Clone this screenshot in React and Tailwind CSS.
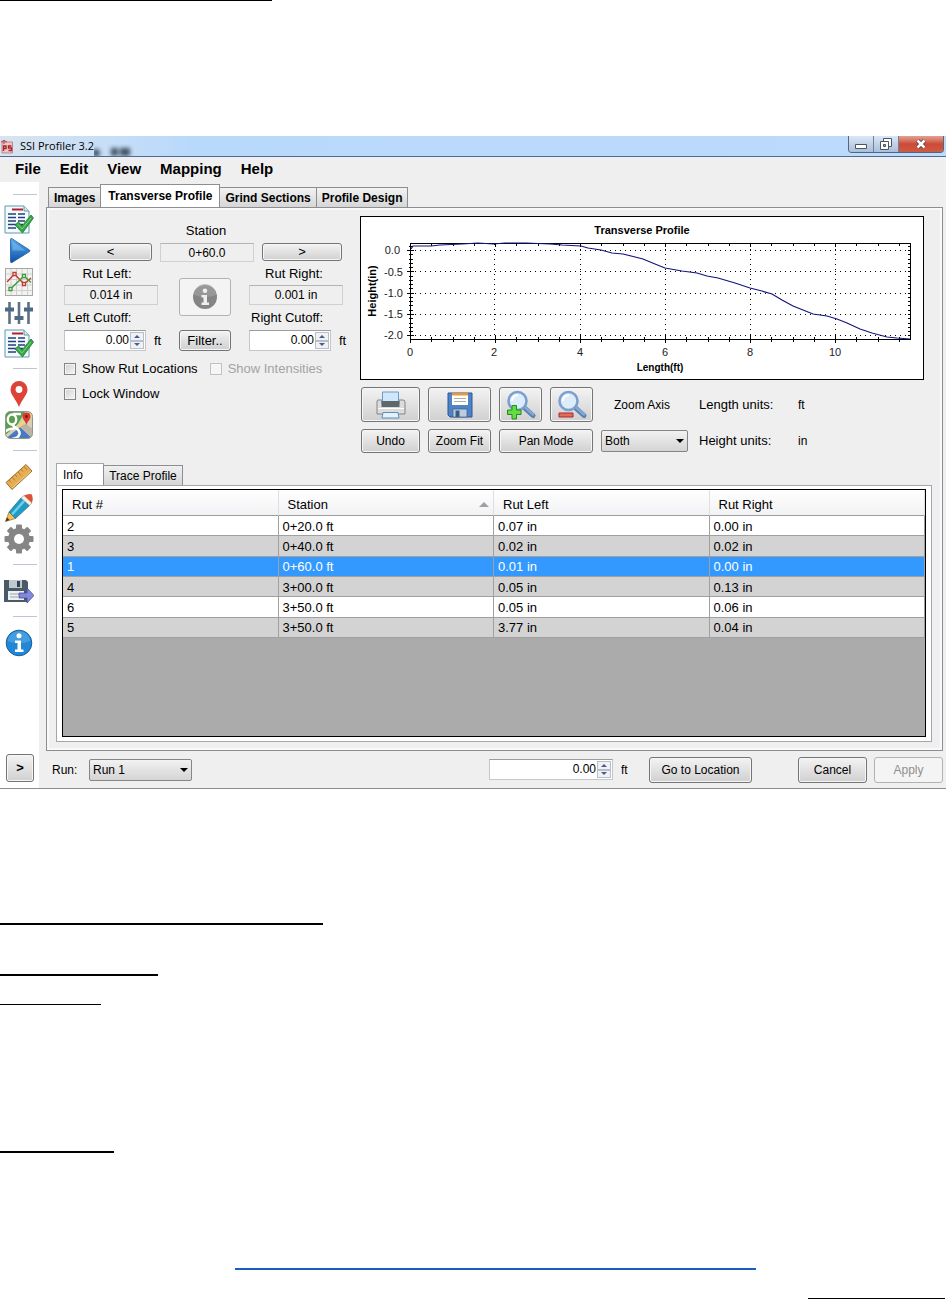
import { useState } from 'react'
import clsx from 'clsx'

const MENUS = ['File', 'Edit', 'View', 'Mapping', 'Help']
const TABS = ['Images', 'Transverse Profile', 'Grind Sections', 'Profile Design']

const RUTS = [
  { id: 2, station: '0+20.0 ft', left: '0.07 in', right: '0.00 in' },
  { id: 3, station: '0+40.0 ft', left: '0.02 in', right: '0.02 in' },
  { id: 1, station: '0+60.0 ft', left: '0.01 in', right: '0.00 in' },
  { id: 4, station: '3+00.0 ft', left: '0.05 in', right: '0.13 in' },
  { id: 6, station: '3+50.0 ft', left: '0.05 in', right: '0.06 in' },
  { id: 5, station: '3+50.0 ft', left: '3.77 in', right: '0.04 in' },
]

const PROFILE =
  '51,33 53,30 71,30 80,29 102,28 118,27 133,28 145,27 166,27 190,28 202,29 221,30 228,32 241,34 252,37 263,38 283,43 295,48 305,52 322,55 337,57 347,60 358,62 375,67 390,72 402,75 412,78 422,84 433,90 443,94 453,98 467,100 477,103 487,107 500,113 512,117 527,121 537,122 550,123'

/* ---------- icons ---------- */

function ReportIcon() {
  return (
    <svg viewBox="0 0 30 30" className="size-[30px]" aria-hidden="true">
      <path d="M1 1h19l5 5v22H1z" fill="#f4f9fc" stroke="#5f9aae" />
      <path d="M20 1v5h5" fill="#d4e6ee" stroke="#5f9aae" />
      <path d="M8 4.500h11" stroke="#b3212f" strokeWidth="2" />
      <path d="M4 9h8M4 12.500h8M4 16h8M4 19.500h8M4 23h8M14 9h7M14 12.500h7M14 16h7M14 19.500h5M14 23h5" stroke="#22407e" strokeWidth="1.500" />
      <path d="M11 20l3.500-3 3.500 4L27 10l2.500 3L18.500 28z" fill="#35a845" stroke="#1f7a31" strokeWidth=".8" />
      <path d="M14 19.500l4 4.500L27 13" fill="none" stroke="#86d890" strokeWidth=".9" />
    </svg>
  )
}

function PlayIcon() {
  return (
    <svg viewBox="0 0 30 30" className="size-[30px]" aria-hidden="true">
      <defs>
        <linearGradient id="play" x1="0" y1="0" x2="0" y2="1">
          <stop offset="0" stopColor="#5aaeee" />
          <stop offset="1" stopColor="#0e4fa8" />
        </linearGradient>
      </defs>
      <path d="M6.500 3.500Q6.500 2 8 2.700L25.500 14q1 .8 0 1.600L8 26.500q-1.500.7-1.500-1z" fill="url(#play)" stroke="#1d5c9e" strokeWidth=".8" />
      <path d="M8.500 5.500l13 9h-13z" fill="#8fcbf5" opacity=".45" />
    </svg>
  )
}

function TrendIcon() {
  return (
    <svg viewBox="0 0 30 30" className="size-[30px]" aria-hidden="true">
      <rect x="1.500" y="1.500" width="27" height="27" fill="#f2f2f0" stroke="#a8a8a8" />
      <path d="M7 2v26M12.500 2v26M18 2v26M23.500 2v26M2 7h26M2 12.500h26M2 18h26M2 23.500h26" stroke="#d0d0ce" />
      <path d="M3 15l7.500-8L20 17l7-6" fill="none" stroke="#c23b30" strokeWidth="1.400" />
      <path d="M6.500 22L20 9l7 6.500" fill="none" stroke="#3f9a3c" strokeWidth="1.400" />
      <g fill="#fff" strokeWidth="1.300">
        <path d="M9 5.500h3v3H9zM18.500 15.500h3v3h-3z" stroke="#c23b30" />
        <path d="M5 20.500h3v3H5zM18.500 7.500h3v3h-3z" stroke="#3f9a3c" />
      </g>
    </svg>
  )
}

function SlidersIcon() {
  return (
    <svg viewBox="0 0 30 30" className="size-[30px]" aria-hidden="true">
      <path d="M5.500 4v22M15 4v22M24.500 4v22" stroke="#5d7183" strokeWidth="2.600" />
      <path d="M1 9.500h9v4H1zM10.500 18h9v4h-9zM20 9.500h9v4h-9z" fill="#4c6a85" />
    </svg>
  )
}

function PinIcon() {
  return (
    <svg viewBox="0 0 30 30" className="size-[30px]" aria-hidden="true">
      <path d="M15 28C12 20 6.500 16 6.500 10.500a8.500 8.500 0 0 1 17 0C23.500 16 18 20 15 28z" fill="#dc4438" />
      <circle cx="15" cy="10.500" r="3.400" fill="#fff" />
    </svg>
  )
}

function MapsIcon() {
  return (
    <svg viewBox="0 0 30 30" className="size-[30px]" aria-hidden="true">
      <defs>
        <clipPath id="maps"><rect x="1.500" y="1.500" width="27" height="27" rx="5" /></clipPath>
      </defs>
      <g clipPath="url(#maps)">
        <path d="M0 0h30v30H0z" fill="#d9cfb4" />
        <path d="M0 0h22L14 14 0 26z" fill="#5a9e50" />
        <path d="M0 30l16-13 14 13z" fill="#4779c4" />
        <path d="M16 16l14 14V20l-8-6z" fill="#b9b4a3" />
        <path d="M14 17L30 3" stroke="#efd877" strokeWidth="2.500" />
        <ellipse cx="8" cy="9.500" rx="4.200" ry="5" fill="none" stroke="#fff" strokeWidth="2.400" />
        <path d="M9 4h8M9 14.500q0 2 3 3.500 4 2.500 3.500 6-1 4.500-7.500 5M11 18.500q-6-.5-10 3" fill="none" stroke="#fff" strokeWidth="2.600" />
      </g>
      <path d="M22.500 15c-1-4-4-5.500-4-8.500a4 4 0 0 1 8 0c0 3-3 4.500-4 8.500z" fill="#d83a30" />
      <circle cx="22.500" cy="6.500" r="1.400" fill="#7d1712" />
      <rect x="1.500" y="1.500" width="27" height="27" rx="5" fill="none" stroke="#8c9a84" />
    </svg>
  )
}

function RulerIcon() {
  return (
    <svg viewBox="0 0 30 30" className="size-[30px]" aria-hidden="true">
      <path d="M2 20.500L22 2.500l6 6.500L8 27.500z" fill="#e6ae53" stroke="#9a6c2d" />
      <path d="M5 18l2 2.500M8 15l3 3.500M11 12.500l2 2.500M14 10l3 3.500M17 7l2 2.500M20 4.500l3 3.500" stroke="#b07c34" />
      <path d="M8 26L27 9" stroke="#f5d08c" />
    </svg>
  )
}

function PencilIcon() {
  return (
    <svg viewBox="0 0 30 30" className="size-[30px]" aria-hidden="true">
      <path d="M1.500 28.500L5 19l6.500 6.500z" fill="#f3bd55" stroke="#9c6b24" strokeWidth=".7" />
      <path d="M1.500 28.500l1.500-4 2.500 2.500z" fill="#3c332c" />
      <path d="M5 19L17 5l8.500 7.500-14 13z" fill="#219bc4" stroke="#176d8c" strokeWidth=".7" />
      <path d="M8 21.500L20.500 7.500" stroke="#6bd0ea" strokeWidth="2.500" />
      <path d="M17 5l3-2.500 8 7.500-2.500 2.500z" fill="#f3efe9" stroke="#998f87" strokeWidth=".6" />
      <path d="M20 2.500q5-2.500 8-1 1.500 4 0 8.500z" fill="#dc5237" />
    </svg>
  )
}

function GearIcon() {
  return (
    <svg viewBox="0 0 30 30" className="size-[30px]" aria-hidden="true">
      <g fill="#858585">
        <rect x="12" y=".5" width="6" height="29" rx="1" />
        <rect x="12" y=".5" width="6" height="29" rx="1" transform="rotate(45 15 15)" />
        <rect x="12" y=".5" width="6" height="29" rx="1" transform="rotate(90 15 15)" />
        <rect x="12" y=".5" width="6" height="29" rx="1" transform="rotate(135 15 15)" />
        <circle cx="15" cy="15" r="11" />
      </g>
      <circle cx="15" cy="15" r="5" fill="#fff" />
    </svg>
  )
}

function ExportIcon() {
  return (
    <svg viewBox="0 0 30 30" className="size-[30px]" aria-hidden="true">
      <path d="M0 4h22l2 2v20H0z" fill="#4a5a67" />
      <path d="M5 4h13v8H5z" fill="#bfc9ce" />
      <path d="M13 5h3v6h-3z" fill="#33424e" />
      <path d="M4 15h16v9H4z" fill="#eef1f2" />
      <path d="M6 18h10M6 21h8" stroke="#9aa5ab" />
      <path d="M15 17h8v-5l7 7.500-7 7.500v-5h-8z" fill="#8288dd" stroke="#464b9c" strokeWidth=".8" />
    </svg>
  )
}

function InfoIcon() {
  return (
    <svg viewBox="0 0 30 30" className="size-[30px]" aria-hidden="true">
      <circle cx="15" cy="15" r="12.800" fill="#2287d4" stroke="#1560a5" />
      <path d="M3.500 13a11.600 11.600 0 0 1 23 0q-11 4.500-23 0z" fill="#63b4ec" opacity=".5" />
      <circle cx="15" cy="7.800" r="2.500" fill="#fff" />
      <path d="M11 12.500h6v9h2.500v2.500h-8.500v-2.500h2.500v-6.500H11z" fill="#fff" />
    </svg>
  )
}

function InfoGrayIcon() {
  return (
    <svg viewBox="0 0 26 26" className="size-[26px]" aria-hidden="true">
      <circle cx="13" cy="13" r="12" fill="#858585" />
      <path d="M2 11a11 11 0 0 1 22 0q-11 4-22 0z" fill="#a5a5a5" opacity=".6" />
      <circle cx="13" cy="6.800" r="2.300" fill="#efefef" />
      <path d="M9.500 11h5.500v7.500h2V21H9.500v-2.500h2v-5h-2z" fill="#efefef" />
    </svg>
  )
}

function PrinterIcon() {
  return (
    <svg viewBox="0 0 30 28" className="h-7 w-[30px]" aria-hidden="true">
      <path d="M2 9h4v4h17V9h4q2 0 2 2v12H1V11q0-2 1-2z" fill="#dcdcdc" stroke="#858585" />
      <path d="M6.500 1h16v11h-16z" fill="#cfe6fb" stroke="#6d9cc7" />
      <path d="M5.500 10h18v6h-18z" fill="#5d686c" />
      <path d="M2 17.500h26" stroke="#fff" />
      <path d="M7 21.500h15l1 5.500H6z" fill="#e4f2fd" stroke="#5f8fb8" />
    </svg>
  )
}

function FloppyIcon() {
  return (
    <svg viewBox="0 0 26 26" className="size-[26px]" aria-hidden="true">
      <path d="M1 1h24v24H3l-2-2z" fill="#4f83c7" stroke="#2c5791" />
      <path d="M5 1h16v12H5z" fill="#fffdf6" />
      <path d="M5 1h16v2.500H5z" fill="#e99736" />
      <path d="M7 6.500h12M7 9.500h12" stroke="#a2adb8" />
      <path d="M6 17h14v8H6z" fill="#bdcddd" stroke="#365d8c" strokeWidth=".7" />
      <path d="M8.500 18.500h4V25h-4z" fill="#365f86" />
    </svg>
  )
}

function MagnifierIcon({ minus }) {
  return (
    <svg viewBox="0 0 32 30" className="h-[30px] w-8" aria-hidden="true">
      <path d="M18 16.500L28 25.500" stroke="#5b7fb0" strokeWidth="5" strokeLinecap="round" />
      <path d="M18 15.500L28 24.500" stroke="#86a9d3" strokeWidth="2.500" strokeLinecap="round" />
      <circle cx="12.500" cy="11" r="9" fill="#dcecfa" stroke="#7b9fce" strokeWidth="2.600" />
      <path d="M7 11q0-5.500 6-6" fill="none" stroke="#fff" strokeWidth="2" />
      {minus ? (
        <path d="M3 23h14v4H3z" fill="#e56a5e" stroke="#a92b25" />
      ) : (
        <path d="M7 15.500h4.500V20H16v4.500h-4.500V29H7v-4.500H2.500V20H7z" fill="#63dc45" stroke="#258a1e" />
      )}
    </svg>
  )
}

function AppIcon() {
  return (
    <svg viewBox="0 0 13 15" className="h-[15px] w-[13px]" aria-hidden="true">
      <path d="M2 3h10.500v11H2z" fill="#e8c9c8" stroke="#b0696a" strokeWidth=".7" />
      <path d="M1 3q3-3 6 0M4 1v4" fill="none" stroke="#b83a3d" />
      <path d="M3.500 12V7h2.500v2.500H3.500M11.500 7H8.500v2h3v2.500h-3" fill="none" stroke="#b31f25" strokeWidth="1.400" />
    </svg>
  )
}

/* ---------- controls ---------- */

const BUTTON = 'flex items-center justify-center rounded-[3px] border'
const BUTTON_ON = 'border-[#747474] bg-linear-to-b from-[#f3f3f3] to-[#d0d0d0] text-black shadow-[inset_0_0_0_1px_#f6f6f6]'
const BUTTON_OFF = 'border-[#b2b2b2] bg-[#f4f4f4] text-[#8f8f8f]'

function Button({ className, disabled, children, ...rest }) {
  return (
    <button type="button" disabled={disabled} className={clsx(BUTTON, disabled ? BUTTON_OFF : BUTTON_ON, className)} {...rest}>
      {children}
    </button>
  )
}

function Spinner({ id, label, className }) {
  const [value, setValue] = useState(0)
  const step = d => setValue(v => Math.max(0, v + d))

  return (
    <div className={clsx('flex h-[21px] border border-[#c4c6cc] border-t-[#9a9ca2] bg-white p-px', className)}>
      <input
        id={id}
        aria-label={label}
        value={value.toFixed(2)}
        onChange={e => setValue(Number(e.target.value) || 0)}
        className="min-w-0 flex-1 pb-0.5 pr-px text-right text-[12px] leading-4 outline-none"
      />
      <div className="flex w-[14px] flex-col">
        <button type="button" aria-label="Increase" onClick={() => step(0.25)} className="flex flex-1 items-center justify-center border border-[#b9bfc9] bg-[#eff1f5]">
          <svg viewBox="0 0 6 3" className="h-[3px] w-1.5"><path d="M0 3l3-3 3 3z" fill="#4a5c8c" /></svg>
        </button>
        <button type="button" aria-label="Decrease" onClick={() => step(-0.25)} className="flex flex-1 items-center justify-center border border-[#b9bfc9] bg-[#eff1f5]">
          <svg viewBox="0 0 6 3" className="h-[3px] w-1.5"><path d="M0 0l3 3 3-3z" fill="#4a5c8c" /></svg>
        </button>
      </div>
    </div>
  )
}

function Select({ id, label, options, className }) {
  return (
    <div className={clsx('relative', className)}>
      <select id={id} aria-label={label} className="h-[22px] w-full appearance-none rounded-[2px] border border-[#858585] bg-linear-to-b from-[#f2f2f2] to-[#d4d4d4] pl-[3px] text-[12px] outline-none">
        {options.map(o => <option key={o}>{o}</option>)}
      </select>
      <svg viewBox="0 0 8 4" className="pointer-events-none absolute right-1 top-[9px] h-1 w-2" aria-hidden="true">
        <path d="M0 0h8L4 4z" />
      </svg>
    </div>
  )
}

function Readout({ id, label, value, className }) {
  return (
    <input id={id} aria-label={label} readOnly value={value} className={clsx('w-[94px] border border-[#d0d0d0] border-t-[#b4b4b4] bg-[#efefef] text-center text-[12px] outline-none', className)} />
  )
}

function Check({ label, disabled }) {
  return (
    <label className={clsx('flex h-4 items-center gap-1.5', disabled && 'text-[#a3a3a3]')}>
      <input
        type="checkbox"
        disabled={disabled}
        className={clsx(
          'size-3 appearance-none border checked:bg-[#3a6ea5]',
          disabled ? 'border-[#c2c2c2] bg-[#f6f6f6]' : 'border-[#858585] bg-linear-to-br from-[#cfcfcf] to-[#f8f8f8] shadow-[inset_0_0_0_1px_#f4f4f4]',
        )}
      />
      {label}
    </label>
  )
}

function Cutoff({ id, label, className }) {
  return (
    <>
      <label htmlFor={id} className={clsx('mt-[5px] block leading-4', className)}>{label}</label>
      <div className="mt-1 flex items-center">
        <Spinner id={id} className="w-[82px]" />
        <span className="ml-2">ft</span>
      </div>
    </>
  )
}

/* ---------- sections ---------- */

function TitleBar() {
  return (
    <header className="flex h-[21px] items-start border-b border-[#4f6a96] bg-linear-to-r from-[#d8e4f0] via-[#b9d9fb] via-20% to-[#bcdafb]">
      <div className="flex h-5 items-center gap-[7px] font-['Open_Sans',sans-serif] text-[11px]">
        <AppIcon />
        <h1>SSI Profiler 3.2</h1>
      </div>
      <svg viewBox="0 0 44 20" className="h-5 w-11" aria-hidden="true">
        <g fill="#1f2f3d" opacity=".8" className="blur-[2px]">
          <circle cx="2" cy="17" r="4" />
          <path d="M17 12h7v8h-7zM26 12h10v8H26z" />
        </g>
      </svg>
      <div className="ml-auto mr-0.5 flex h-[17px] overflow-hidden rounded-b-[4px] border border-t-0 border-[#55657d]">
        <button type="button" aria-label="Minimize" className="flex w-[25px] items-center justify-center border-r border-[#6f819b] bg-linear-to-b from-[#dbe7f5] to-[#a9bfd9]">
          <svg viewBox="0 0 12 5" className="mt-1 h-[5px] w-3"><path d="M.5.5h11v4H.5z" fill="#fff" stroke="#4b5466" /></svg>
        </button>
        <button type="button" aria-label="Restore" className="flex w-[25px] items-center justify-center border-r border-[#6f819b] bg-linear-to-b from-[#dbe7f5] to-[#a9bfd9]">
          <svg viewBox="0 0 12 12" className="size-3">
            <path d="M3.500.5h8v8h-8z" fill="#fff" stroke="#4b5466" />
            <path d="M.5 3.500h8v8h-8z" fill="#fff" stroke="#4b5466" />
            <path d="M3.500 6.500h2v2h-2z" fill="#8da3c0" stroke="#4b5466" />
          </svg>
        </button>
        <button type="button" aria-label="Close" className="flex w-[44px] items-center justify-center bg-linear-to-b from-[#e3a194] via-[#cc4a36] to-[#cf5a44]">
          <svg viewBox="0 0 12 10" className="h-2.5 w-3">
            <path d="M2.500 1.500l7 7M9.500 1.500l-7 7" stroke="#5c3535" strokeWidth="4.200" />
            <path d="M2.500 1.500l7 7M9.500 1.500l-7 7" stroke="#fff" strokeWidth="2.600" />
          </svg>
        </button>
      </div>
    </header>
  )
}

function Divider({ className }) {
  return <hr className={clsx('ml-[13px] w-6 border-[#bcc5d4]', className)} />
}

function Tool({ label, children }) {
  return (
    <button type="button" aria-label={label} className="flex h-[31px] w-full items-center pl-1">
      {children}
    </button>
  )
}

function Sidebar() {
  return (
    <aside className="flex w-[39px] shrink-0 flex-col bg-white pb-1.5">
      <Divider className="mb-[9px] mt-3" />
      <Tool label="Report"><ReportIcon /></Tool>
      <Tool label="Run"><PlayIcon /></Tool>
      <Tool label="Profile chart"><TrendIcon /></Tool>
      <Tool label="Settings"><SlidersIcon /></Tool>
      <Tool label="Summary report"><ReportIcon /></Tool>
      <Divider className="my-[9px]" />
      <Tool label="Markers"><PinIcon /></Tool>
      <Tool label="Maps"><MapsIcon /></Tool>
      <Divider className="my-2.5" />
      <Tool label="Measure"><RulerIcon /></Tool>
      <Tool label="Edit"><PencilIcon /></Tool>
      <Tool label="Options"><GearIcon /></Tool>
      <Divider className="my-2.5" />
      <Tool label="Export"><ExportIcon /></Tool>
      <Divider className="my-2.5" />
      <Tool label="About"><InfoIcon /></Tool>
      <Button className="ml-1.5 mt-auto h-7 w-7 text-[13px] font-bold">&gt;</Button>
    </aside>
  )
}

function ProfileChart() {
  const minorX = Array.from({ length: 24 }, (_, i) => 50.5 + i * 21.25)
  const minorY = Array.from({ length: 22 }, (_, i) => 30.2 + i * 4.27)

  return (
    <figure className="border border-black bg-white">
      <svg viewBox="1 1 562 162" className="block w-full font-['Liberation_Sans',sans-serif]" role="img" aria-label="Transverse Profile">
        <text x="282" y="18" textAnchor="middle" fontSize="11" fontWeight="bold">Transverse Profile</text>
        <g stroke="#000" shapeRendering="crispEdges">
          {[34.5, 55.5, 77.5, 98.5, 119.5].map(y => (
            <path key={y} d={`M50 ${y}H550`} strokeDasharray="1 4" />
          ))}
          {[134.5, 220.5, 305.5, 390.5, 475.5].map(x => (
            <path key={x} d={`M${x} 28V123`} strokeDasharray="1 4" />
          ))}
          <path d="M50.500 27.500H550.500V123.500H50.500z" fill="none" />
          {minorX.map((x, i) => (
            <path key={x} d={i % 4 ? `M${x} 121v5M${x} 27v3` : `M${x} 120v7M${x} 27v4`} />
          ))}
          {minorY.map(y => (
            <path key={y} d={`M49 ${y}h4M548 ${y}h3`} />
          ))}
          {[34.5, 55.5, 77.5, 98.5, 119.5].map(y => (
            <path key={y} d={`M47 ${y}h7`} />
          ))}
        </g>
        <polyline points={PROFILE} fill="none" stroke="#14147c" strokeWidth="1.200" />
        <g fontSize="11" fill="#222" textAnchor="end">
          <text x="40" y="38">0.0</text>
          <text x="43" y="60">-0.5</text>
          <text x="43" y="81">-1.0</text>
          <text x="43" y="102">-1.5</text>
          <text x="43" y="123">-2.0</text>
        </g>
        <g fontSize="11" fill="#222" textAnchor="middle">
          <text x="50" y="140">0</text>
          <text x="134" y="140">2</text>
          <text x="220" y="140">4</text>
          <text x="305" y="140">6</text>
          <text x="390" y="140">8</text>
          <text x="475" y="140">10</text>
        </g>
        <text x="300" y="155" textAnchor="middle" fontSize="10" fontWeight="bold">Length(ft)</text>
        <text transform="translate(16 75) rotate(-90)" textAnchor="middle" fontSize="11" fontWeight="bold">Height(in)</text>
      </svg>
    </figure>
  )
}

function StationControls() {
  return (
    <section className="w-[296px] shrink-0 pt-[7px] text-[13px]">
      <label htmlFor="station" className="block w-[284px] text-center leading-4">Station</label>
      <div className="mt-1 flex gap-2 pl-[5px]">
        <Button className="h-[18px] w-[83px]">&lt;</Button>
        <Readout id="station" value="0+60.0" className="h-[19px]" />
        <Button className="h-[18px] w-[80px]">&gt;</Button>
      </div>
      <div className="mt-1 flex">
        <div className="w-[115px]">
          <label htmlFor="rut-left" className="block w-[86px] text-center leading-4">Rut Left:</label>
          <Readout id="rut-left" value="0.014 in" className="mt-[3px] h-5" />
          <Cutoff id="cutoff-left" label="Left Cutoff:" className="pl-1" />
        </div>
        <div className="flex w-[52px] flex-col justify-end gap-[14px]">
          <Button disabled aria-label="Station info" className="h-[38px]"><InfoGrayIcon /></Button>
          <Button className="h-[21px]">Filter..</Button>
        </div>
        <div className="ml-[18px]">
          <label htmlFor="rut-right" className="block w-[90px] text-center leading-4">Rut Right:</label>
          <Readout id="rut-right" value="0.001 in" className="mt-[3px] h-5" />
          <Cutoff id="cutoff-right" label="Right Cutoff:" className="pl-0.5" />
        </div>
      </div>
      <div className="mt-2.5 flex gap-3">
        <Check label="Show Rut Locations" />
        <Check label="Show Intensities" disabled />
      </div>
      <div className="mt-[9px]">
        <Check label="Lock Window" />
      </div>
    </section>
  )
}

function ChartControls() {
  return (
    <div className="mt-[7px] grid grid-cols-[59px_63px_43px_43px_87px_94px_auto] items-center gap-x-2 gap-y-[7px] pl-px text-[12px]">
      <Button aria-label="Print" className="h-[35px]"><PrinterIcon /></Button>
      <Button aria-label="Save" className="h-[35px]"><FloppyIcon /></Button>
      <Button aria-label="Zoom in" className="h-[35px]"><MagnifierIcon /></Button>
      <Button aria-label="Zoom out" className="h-[35px]"><MagnifierIcon minus /></Button>
      <label htmlFor="zoom-axis" className="pl-[13px]">Zoom Axis</label>
      <span className="pl-[3px] text-[13px]">Length units:</span>
      <span>ft</span>
      <Button className="h-6">Undo</Button>
      <Button className="h-6">Zoom Fit</Button>
      <Button className="col-span-2 h-6">Pan Mode</Button>
      <Select id="zoom-axis" options={['Both', 'X', 'Y']} />
      <span className="pl-[3px] text-[13px]">Height units:</span>
      <span>in</span>
    </div>
  )
}

function RutTable() {
  const [selected, setSelected] = useState(1)
  const cell = 'border-b border-r border-[#a0a0a0] pl-1 pt-0.5'
  const head = 'border-b border-r border-b-[#9c9c9c] border-r-[#dcdfe3] pl-[9px] pr-1 pt-1 text-left font-normal'

  return (
    <div className="h-[248px] border border-black bg-[#ababab] text-[13px] leading-4">
      <table className="h-[148px] w-full table-fixed border-separate border-spacing-0">
        <thead>
          <tr className="h-[26px] bg-linear-to-b from-white to-[#f1f2f4]">
            <th className={head}>Rut #</th>
            <th className={head}>
              <span className="flex items-center justify-between">
                Station
                <svg viewBox="0 0 10 5" className="h-[5px] w-2.5" aria-hidden="true"><path d="M0 5l5-5 5 5z" fill="#a0a0a0" /></svg>
              </span>
            </th>
            <th className={head}>Rut Left</th>
            <th className={head}>Rut Right</th>
          </tr>
        </thead>
        <tbody>
          {RUTS.map((r, i) => (
            <tr
              key={r.id}
              onClick={() => setSelected(r.id)}
              className={r.id === selected ? 'bg-[#3399ff] text-white' : i % 2 ? 'bg-[#d3d3d3]' : 'bg-white'}
            >
              <td className={cell}>{r.id}</td>
              <td className={cell}>{r.station}</td>
              <td className={cell}>{r.left}</td>
              <td className={cell}>{r.right}</td>
            </tr>
          ))}
        </tbody>
      </table>
    </div>
  )
}

function MainTabs() {
  const [tab, setTab] = useState('Transverse Profile')

  return (
    <div role="tablist" className="flex h-[25px] items-end pl-0.5 pt-0.5 text-[12px] font-bold">
      {TABS.map(t => (
        <button
          key={t}
          type="button"
          role="tab"
          aria-selected={t === tab}
          onClick={() => setTab(t)}
          className={clsx(
            '-ml-px border border-b-0 border-[#8c8e94] first:ml-0',
            t === tab ? 'h-[23px] bg-white px-[7px]' : 'h-5 bg-linear-to-b from-[#f2f2f2] to-[#d6d6d6] px-[5px]',
          )}
        >
          {t}
        </button>
      ))}
    </div>
  )
}

function StatusBar() {
  return (
    <footer className="flex h-[37px] items-center pl-1.5 text-[12px]">
      <label htmlFor="run" className="w-[37px]">Run:</label>
      <Select id="run" options={['Run 1']} className="w-[103px]" />
      <Spinner label="Location" className="ml-auto w-[124px]" />
      <span className="w-9 pl-2">ft</span>
      <Button className="h-[26px] w-[103px]">Go to Location</Button>
      <Button className="ml-[46px] h-[26px] w-[69px]">Cancel</Button>
      <Button disabled className="ml-[7px] h-[26px] w-[69px]">Apply</Button>
    </footer>
  )
}

function ProfilerWindow() {
  return (
    <div className="border-b border-[#8f8b8c] bg-[#efefef]">
      <TitleBar />
      <nav className="flex h-[25px] items-center gap-[19px] pl-[15px] text-[15px] font-bold">
        {MENUS.map(m => <button key={m} type="button">{m}</button>)}
      </nav>
      <div className="flex">
        <Sidebar />
        <main className="min-w-0 flex-1 pl-[7px] pr-[3px]">
          <MainTabs />
          <div className="border border-[#8c8e94] pb-2 pt-2 shadow-[inset_0_0_0_2px_#f9f9f9]">
            <div className="flex pl-[17px] pr-[18px]">
              <StationControls />
              <div className="min-w-0 flex-1">
                <ProfileChart />
                <ChartControls />
              </div>
            </div>
            <div className="mt-2.5 pl-[9px] pr-2.5">
              <div role="tablist" className="flex items-end text-[12px]">
                <button type="button" role="tab" aria-selected="true" className="h-[22px] w-[48px] border border-b-0 border-[#a4a6ab] bg-white pl-1.5 text-left">Info</button>
                <button type="button" role="tab" aria-selected="false" className="-ml-px h-5 w-[80px] border border-b-0 border-[#8c8e94] bg-linear-to-b from-[#f0f0f0] to-[#d6d6d6]">Trace Profile</button>
              </div>
              <div className="border border-[#a4a6ab] bg-white px-[5px] pb-1 pt-[3px]">
                <RutTable />
              </div>
            </div>
          </div>
          <StatusBar />
        </main>
      </div>
    </div>
  )
}

export default function App() {
  return (
    <div className="flow-root bg-white font-['Liberation_Sans',Arial,sans-serif] text-black">
      <hr className="w-[272px] border-black" />
      <div className="mt-[135px]">
        <ProfilerWindow />
      </div>
      <hr className="mt-[134px] w-[323px] border-t-2 border-black" />
      <hr className="mt-[49px] w-[158px] border-t-2 border-black" />
      <hr className="mt-7 w-[101px] border-black" />
      <hr className="mt-[146px] w-[114px] border-t-2 border-black" />
      <hr className="ml-[235px] mt-[115px] w-[521px] border-t-2 border-[#1a5dc0]" />
      <hr className="ml-auto mr-px mt-7 w-[137px] border-black" />
    </div>
  )
}
